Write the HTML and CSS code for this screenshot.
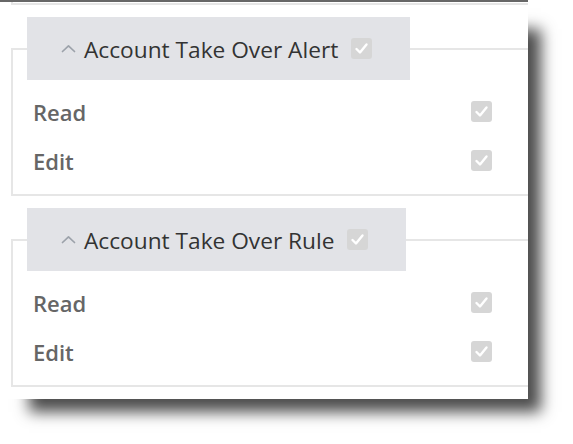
FILE: index.html
```html
<!DOCTYPE html>
<html lang="en">
<head>
<meta charset="utf-8">
<title>Permissions</title>
<link rel="stylesheet" href="styles.css">
</head>
<body>
<div class="page">
<div class="shot">
  <div class="prev"></div>

  <fieldset class="group">
    <legend class="group-legend">
      <div class="group-head">
        <svg class="chev" width="15" height="9" viewBox="0 0 15 9"><polyline points="1.5,7.5 7.5,1.8 13.5,7.5" fill="none" stroke="#9ca2aa" stroke-width="1.7" stroke-linecap="round" stroke-linejoin="round"/></svg>
        <span class="group-title">Account Take Over Alert</span>
        <span class="cb"><svg width="21" height="21" viewBox="0 0 21 21"><polyline points="5.5,11 9,14.5 15.5,6.5" fill="none" stroke="#fff" stroke-width="2.4" stroke-linecap="round" stroke-linejoin="round"/></svg></span>
      </div>
    </legend>
    <div class="row"><span class="label">Read</span><span class="cb"><svg width="21" height="21" viewBox="0 0 21 21"><polyline points="5.5,11 9,14.5 15.5,6.5" fill="none" stroke="#fff" stroke-width="2.4" stroke-linecap="round" stroke-linejoin="round"/></svg></span></div>
    <div class="row"><span class="label">Edit</span><span class="cb"><svg width="21" height="21" viewBox="0 0 21 21"><polyline points="5.5,11 9,14.5 15.5,6.5" fill="none" stroke="#fff" stroke-width="2.4" stroke-linecap="round" stroke-linejoin="round"/></svg></span></div>
  </fieldset>

  <fieldset class="group group-second">
    <legend class="group-legend">
      <div class="group-head">
        <svg class="chev" width="15" height="9" viewBox="0 0 15 9"><polyline points="1.5,7.5 7.5,1.8 13.5,7.5" fill="none" stroke="#9ca2aa" stroke-width="1.7" stroke-linecap="round" stroke-linejoin="round"/></svg>
        <span class="group-title">Account Take Over Rule</span>
        <span class="cb"><svg width="21" height="21" viewBox="0 0 21 21"><polyline points="5.5,11 9,14.5 15.5,6.5" fill="none" stroke="#fff" stroke-width="2.4" stroke-linecap="round" stroke-linejoin="round"/></svg></span>
      </div>
    </legend>
    <div class="row"><span class="label">Read</span><span class="cb"><svg width="21" height="21" viewBox="0 0 21 21"><polyline points="5.5,11 9,14.5 15.5,6.5" fill="none" stroke="#fff" stroke-width="2.4" stroke-linecap="round" stroke-linejoin="round"/></svg></span></div>
    <div class="row"><span class="label">Edit</span><span class="cb"><svg width="21" height="21" viewBox="0 0 21 21"><polyline points="5.5,11 9,14.5 15.5,6.5" fill="none" stroke="#fff" stroke-width="2.4" stroke-linecap="round" stroke-linejoin="round"/></svg></span></div>
  </fieldset>
</div>
</div>
</body>
</html>
```

FILE: styles.css
```css
html, body {
  margin: 0;
  padding: 0;
  background: #ffffff;
}

body {
  font-family: "Open Sans", "Noto Sans", sans-serif;
  min-height: 444px;
}

.page {
  width: 573px;
  height: 444px;
  overflow: hidden;
}

.shot {
  width: 528px;
  height: 399px;
  box-sizing: border-box;
  border-top: 2px solid #676767;
  background: #ffffff;
  overflow: hidden;
  box-shadow: 21px 21px 14px -8px rgba(0, 0, 0, 0.7);
}

.prev {
  margin-left: 11px;
  height: 1px;
  border-left: 2px solid #e6e6e6;
  border-bottom: 2px solid #e6e6e6;
}

.group {
  margin: 12px 0 0 11px;
  padding: 0 0 9px 0;
  width: 600px;
  border: 2px solid #e6e6e6;
  min-width: 0;
}

.group-second {
  margin-top: 12px;
}

.group-legend {
  margin-left: 14px;
  padding: 0;
  background: #e2e3e7;
}

.group-head {
  display: flex;
  align-items: center;
  height: 63px;
  padding: 0 38px 0 34px;
}

.chev {
  display: block;
  margin-right: 8px;
  margin-top: -1px;
}

.group-title {
  font-size: 22.7px;
  color: #333333;
  margin-right: 13px;
  padding-top: 2px;
}

.cb {
  display: block;
  width: 21px;
  height: 21px;
  border-radius: 3px;
  background: #d6d6d6;
}

.cb svg {
  display: block;
}

.row {
  display: flex;
  align-items: center;
  justify-content: space-between;
  box-sizing: border-box;
  width: 479px;
  height: 49px;
  padding-left: 20px;
}

.row:first-of-type {
  margin-top: 7px;
}

.label {
  font-size: 22px;
  font-weight: 600;
  color: #666666;
  padding-top: 1px;
}
```
